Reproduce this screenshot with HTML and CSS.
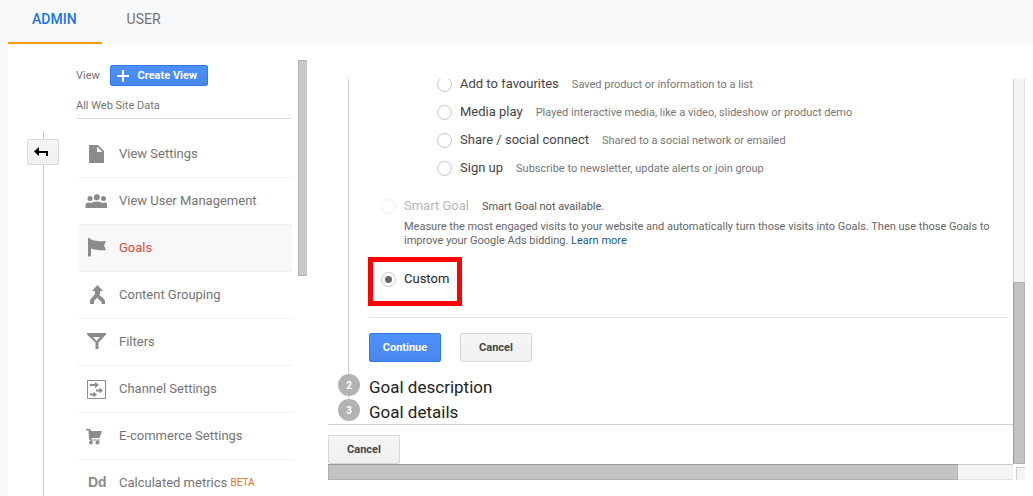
FILE: index.html
```html
<!DOCTYPE html>
<html lang="en">
<head>
<meta charset="utf-8">
<title>Admin – Goals</title>
<link rel="stylesheet" href="styles.css">
</head>
<body>
<nav class="tabs">
  <a class="tab tab-active" href="#admin">ADMIN</a>
  <a class="tab" href="#user">USER</a>
</nav>
<div class="page">
  <div class="rail">
    <button class="btn back" type="button" aria-label="Back">
      <svg width="14" height="10" viewBox="0 0 14 10"><path d="M0 4.500 5 0v4h9v5h-2V6H5v3z"/></svg>
    </button>
  </div>
  <aside class="sidebar">
    <div class="view-head">
      <span>View</span>
      <button class="btn btn-blue create" type="button">
        <svg width="12" height="12" viewBox="0 0 12 12"><path d="M5 0h2v5h5v2H7v5H5V7H0V5h5z" fill="#fff"/></svg>
        Create View
      </button>
    </div>
    <div class="view-name">All Web Site Data</div>
    <ul class="menu">
      <li><a class="item" href="#settings"><svg class="icon" viewBox="0 0 22 22"><path d="M4 2h9l6 6v12H4zM12 3.500v5.500h5.500z" fill-rule="evenodd"/></svg>View Settings</a></li>
      <li><a class="item" href="#users"><svg class="icon" viewBox="0 0 22 22"><circle cx="5" cy="8.500" r="2.500"/><circle cx="11.800" cy="7.200" r="3"/><circle cx="18.500" cy="8.500" r="2.500"/><path d="M.5 18v-3q0-2.500 3-2.500 1.500 0 2.500.5 2-1.500 6-1.500t5.500 1.500q1-.5 2.500-.5 2.500 0 2.500 2.500v3z"/></svg>View User Management</a></li>
      <li><a class="item item-active" href="#goals"><svg class="icon" viewBox="0 0 22 22"><path d="M3 1h2v1q4 2 8 2 4 .5 8 0l-2 4.500 2 4.500q-5 .5-8 0-4-.5-7-1.500v8H3z"/></svg>Goals</a></li>
      <li><a class="item" href="#grouping"><svg class="icon" viewBox="0 0 22 22"><path d="m12.500 1 5.500 6h-3v2q0 2-2.500 4.500-3.500 3-3.500 4V20H5v-3q0-1.500 2-3.500 3-3 3-4V7H7zM14.500 11l4 3.500Q20 16 20 18v2h-3.500v-2l-4-4z"/></svg>Content Grouping</a></li>
      <li><a class="item" href="#filters"><svg class="icon" viewBox="0 0 22 22"><path d="M2 2h19v1.500l-7.500 8V18h-3v-6.500L2 3.500zm6 4 3.500 4L15 6z" fill-rule="evenodd"/></svg>Filters</a></li>
      <li><a class="item" href="#channels"><svg class="icon" viewBox="0 0 22 22"><path d="M2.500 2.500h18v18h-18z" fill="none" stroke="#8b8b8b"/><path d="M5 6h5V4l4 3-4 3V8H5zM11 11.500h3.500v-2l3.500 3-3.500 3v-2H11zM5 15.500h3.500v-2l3.500 3-3.500 3v-2H5z"/></svg>Channel Settings</a></li>
      <li><a class="item" href="#ecommerce"><svg class="icon" viewBox="0 0 22 22"><path d="M1 4h4l1 2h11l-2.500 7H6.500v1.500H15v1H5l-1-2L3.500 5.500H1z"/><circle cx="6" cy="17.500" r="2"/><circle cx="12.500" cy="17.500" r="2"/></svg>E-commerce Settings</a></li>
      <li><a class="item" href="#metrics"><span class="icon icon-text">Dd</span>Calculated metrics <span class="beta">BETA</span></a></li>
    </ul>
  </aside>
  <div class="side-thumb"></div>
  <main class="panel">
    <div class="content">
      <form class="steps">
        <div class="step-one">
          <div class="options">
            <div class="option"><input type="radio" name="goal" id="fav"><label for="fav">Add to favourites</label><span class="hint">Saved product or information to a list</span></div>
            <div class="option"><input type="radio" name="goal" id="media"><label for="media">Media play</label><span class="hint">Played interactive media, like a video, slideshow or product demo</span></div>
            <div class="option"><input type="radio" name="goal" id="share"><label for="share">Share / social connect</label><span class="hint">Shared to a social network or emailed</span></div>
            <div class="option"><input type="radio" name="goal" id="sign"><label for="sign">Sign up</label><span class="hint">Subscribe to newsletter, update alerts or join group</span></div>
          </div>
          <div class="option smart"><input type="radio" name="goal" id="smart" disabled><label for="smart">Smart Goal</label><span class="hint">Smart Goal not available.</span></div>
          <p class="about">Measure the most engaged visits to your website and automatically turn those visits into Goals. Then use those Goals to improve your Google Ads bidding. <a href="#more">Learn more</a></p>
          <div class="option custom"><input type="radio" name="goal" id="custom" checked><label for="custom">Custom</label></div>
          <div class="actions">
            <button class="btn btn-blue wide" type="button">Continue</button>
            <button class="btn wide" type="button">Cancel</button>
          </div>
        </div>
        <div class="step"><span class="num">2</span><span class="step-title">Goal description</span></div>
        <div class="step"><span class="num">3</span><span class="step-title">Goal details</span></div>
      </form>
      <div class="footer"><button class="btn wide" type="button">Cancel</button></div>
    </div>
    <div class="vbar"><div class="vthumb"></div></div>
    <div class="hbar"><div class="hthumb"></div></div>
    <div class="corner"></div>
  </main>
</div>
</body>
</html>
```
FILE: styles.css
```css
* { box-sizing: border-box; }
body {
  margin: 0;
  height: 100vh;
  overflow: hidden;
  display: flex;
  flex-direction: column;
  background: #f8f9fb;
  color: #747474;
  font-family: Roboto, "Liberation Sans", sans-serif;
  font-size: 13px;
}
a { color: inherit; text-decoration: none; }
.tabs { display: flex; flex: none; gap: 1px; height: 44px; padding-left: 8px; }
.tab { padding: 0 24px; line-height: 39px; font-size: 14px; border-bottom: 2px solid transparent; }
.tab-active { padding-right: 25px; color: #1a73e8; border-color: #ff9800; font-weight: 500; }
.page { flex: 1; min-height: 0; display: flex; margin-left: 8px; background: #fff; }

.rail { flex: none; width: 32px; margin: 87px 17px 0 19px; padding-top: 8px; background: linear-gradient(#ccc, #ccc) 16px 0 / 1px 100% no-repeat; }
.btn {
  display: inline-flex;
  align-items: center;
  justify-content: center;
  border: 1px solid #d8d8d8;
  border-radius: 2px;
  background: linear-gradient(#f6f6f6, #f0f0f0);
  color: #444;
  font: bold 11px Roboto, "Liberation Sans", sans-serif;
  padding: 0;
}
.btn-blue { border-color: #3079ed; background: linear-gradient(#4d90fe, #4787ed); color: #fff; }
.back { width: 32px; height: 26px; padding-right: 4px; }
.wide { width: 72px; height: 29px; }

.sidebar { flex: none; width: 216px; padding-top: 21px; }
.view-head { display: flex; align-items: center; gap: 10px; font-size: 11px; }
.create { width: 98px; height: 21px; gap: 9px; padding-right: 4px; }
.view-name { height: 33px; padding-top: 13px; border-bottom: 1px solid #ddd; font-size: 11px; line-height: 13px; }
.menu { list-style: none; margin: 12px 0 0 2px; padding: 0; }
.item { display: flex; align-items: center; height: 47px; padding: 0 0 2px 7px; border-bottom: 1px solid #f0f0f0; white-space: pre; }
.item-active { background: #f8f8f8; color: #dd4b39; }
.icon { width: 22px; height: 22px; margin: 2px 12px 0 0; fill: #8b8b8b; }
.icon-text { margin-top: 0; padding-left: 3px; font: bold 14px/22px "Liberation Sans", sans-serif; color: #8b8b8b; }
.beta { color: #e8710a; font-size: 10px; }
.side-thumb { flex: none; width: 9px; height: 216px; margin: 16px 21px 0 6px; background: #c9c9c9; border: 1px solid #b4b4b4; border-right: 0; }

.panel {
  flex: 1;
  min-width: 0;
  display: grid;
  grid-template-columns: 1fr 12px;
  grid-template-rows: 385px 16px;
  margin: 35px 8px 0 0;
}
.content { overflow: hidden; display: flex; flex-direction: column; }
.steps { background: linear-gradient(#ccc, #ccc) 20px 0 / 1px 320px no-repeat; }
.step-one { padding: 0 5px 0 41px; }
.options { margin-top: -9px; padding-left: 56px; }
.option { display: flex; align-items: center; height: 28px; padding-left: 12px; color: #444; }
.option label { padding-bottom: 2px; }
.option input {
  appearance: none;
  flex: none;
  width: 15px;
  height: 15px;
  margin: 0 8px 0 0;
  border: 1px solid #c6c6c6;
  border-radius: 50%;
  background: #fff;
}
.option input:checked { background: radial-gradient(circle, #666 3px, #fff 4px); }
.option input:disabled { border-color: #eee; }
.hint { margin-left: 13px; font-size: 11px; color: #777; }
.smart { margin-top: 10px; }
.smart label { color: #b8b8b8; }
.smart .hint { color: #555; }
.about { margin: 0 5px 0 35px; font-size: 11px; line-height: 14px; color: #666; }
.about a { color: #15599c; }
.custom { position: relative; width: 94px; height: 49px; margin: 9px 0 11px -1px; padding: 0 0 4px 13px; color: #222; }
.custom::after { content: ""; position: absolute; inset: 0; border: 5px solid #f00; pointer-events: none; }
.actions { display: flex; gap: 19px; padding: 15px 0 12px; border-top: 1px solid #e0e0e0; }
.step { display: flex; align-items: center; height: 25px; gap: 9px; padding-left: 10px; font-size: 17px; line-height: 23px; color: #222; }
.step-title { padding-top: 2px; }
.num { width: 22px; height: 22px; margin-bottom: 3px; border-radius: 50%; background: #b3b3b3; color: #fff; font: bold 10px/23px Roboto, sans-serif; text-align: center; }
.footer { padding-top: 10px; border-top: 1px solid #ccc; }
.vbar { display: flex; flex-direction: column; justify-content: flex-end; background: #f4f4f4; border: 1px solid #e0e0e0; border-width: 0 1px 0 1px; border-left-color: #ccc; }
.vthumb { height: 182px; margin: 0 -1px; background: #c3c3c3; border: 1px solid #b0b0b0; border-left-color: #999; }
.hbar { background: #f4f4f4; border-top: 1px solid #ccc; border-bottom: 1px solid #e0e0e0; }
.hthumb { width: 92%; height: 16px; margin: -1px 0; background: #c3c3c3; border: 1px solid #b0b0b0; border-top-color: #999; }
.corner { margin: 3px 0 0 3px; background: #f4f4f4; border: 1px solid #ccc; border-width: 1px 0 0 1px; }
```
